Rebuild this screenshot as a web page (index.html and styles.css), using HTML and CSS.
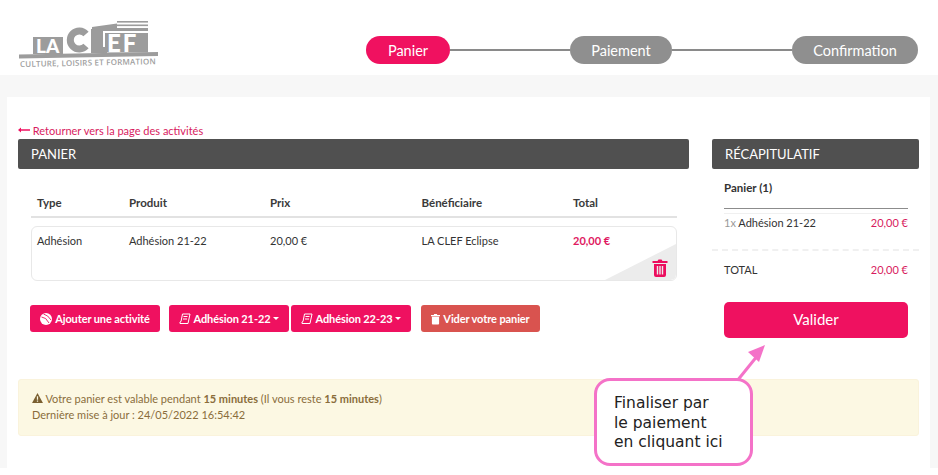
FILE: index.html
```html
<!DOCTYPE html>
<html lang="fr">
<head>
<meta charset="utf-8">
<title>Panier</title>
<link rel="stylesheet" href="styles.css">
</head>
<body>
<header class="top">
  <svg class="logo" viewBox="0 0 140 52" aria-label="La Clef">
    <rect class="g" x="98" y="2" width="31" height="1.600"/>
    <rect class="g" x="98" y="5.500" width="31" height="1.600"/>
    <path class="g" d="M73 8 L98 4.500 V9 H129 V12 H73Z"/>
    <path class="g" d="M72 10 H84 V28 H88 V34 H72Z"/>
    <path class="g" d="M86 14 H129 V33.500 H86Z"/>
    <path class="g" d="M14 18 H44 V35 H14Z"/>
    <path class="g" d="M0 35.500 L139 33 V37 L0 39.500Z"/>
    <text class="la" x="17" y="33.500">LA</text>
    <path class="c" d="M67 15 A9 9 0 1 0 67 27"/>
    <text class="ef" x="88" y="32.500">EF</text>
    <text class="sub" x="1" y="48" transform="rotate(-1.200 1 48)">CULTURE, LOISIRS ET FORMATION</text>
  </svg>
  <nav class="steps">
    <span class="step active">Panier</span>
    <span class="link l1"></span>
    <span class="step s2">Paiement</span>
    <span class="link l2"></span>
    <span class="step s3">Confirmation</span>
  </nav>
</header>

<div class="band">
  <main class="card">
    <section class="cart">
      <a class="back"><svg class="back-ic" viewBox="0 0 12 6"><path d="M0 3 L3 0.5 V2.300 H12 V3.700 H3 V5.500Z"/></svg> Retourner vers la page des activités</a>
      <h2 class="bar">PANIER</h2>
      <div class="table">
        <div class="row head"><span>Type</span><span>Produit</span><span>Prix</span><span>Bénéficiaire</span><span>Total</span></div>
        <div class="row item">
          <span>Adhésion</span><span>Adhésion 21-22</span><span>20,00 €</span><span>LA CLEF Eclipse</span><span class="pink">20,00 €</span>
          <svg class="corner" viewBox="0 0 71 36" preserveAspectRatio="none"><path d="M0 36 L71 0 V30 Q71 36 65 36Z"/></svg>
          <svg class="trash" viewBox="0 0 16 18"><path d="M5.500 2 L6.500 .5 H9.500 L10.500 2 H15.500 V4 H.5 V2Z M2 5 H14 V16 Q14 18 12 18 H4 Q2 18 2 16Z M4.800 7 V15.500 H6.200 V7Z M7.300 7 V15.500 H8.700 V7Z M9.800 7 V15.500 H11.200 V7Z" fill-rule="evenodd"/></svg>
        </div>
      </div>
      <div class="actions">
        <button class="btn b1"><svg class="ic" viewBox="0 0 12 12"><circle cx="6" cy="6" r="6"/><path class="cut" d="M1.500 4 Q6 4 9 10 M3.500 1 Q8 2 11 7"/></svg> Ajouter une activité</button>
        <button class="btn b2"><svg class="ic" viewBox="0 0 12 12"><path class="scroll" d="M3.500 1 H11 L9 10.500 H1 Q.5 8.500 2 8.500 Z M4.500 3.500 H8.500 M4 6 H8"/></svg> Adhésion 21-22<i class="caret"></i></button>
        <button class="btn b3"><svg class="ic" viewBox="0 0 12 12"><path class="scroll" d="M3.500 1 H11 L9 10.500 H1 Q.5 8.500 2 8.500 Z M4.500 3.500 H8.500 M4 6 H8"/></svg> Adhésion 22-23<i class="caret"></i></button>
        <button class="btn danger"><svg class="ic ic-t" viewBox="0 0 10 12"><path d="M3 1.500 L3.500 .5 H6.500 L7 1.500 H10 V3 H0 V1.500Z M1 3.500 H9 V11 Q9 12 8 12 H2 Q1 12 1 11Z"/></svg> Vider votre panier</button>
      </div>
    </section>

    <aside class="recap">
      <h2 class="bar">RÉCAPITULATIF</h2>
      <div class="recap-body">
        <h3 class="recap-title">Panier (1)</h3>
        <div class="line"><span><span class="qty">1x</span> Adhésion 21-22</span><span class="pink">20,00 €</span></div>
      </div>
      <div class="total-wrap">
        <div class="line total"><span>TOTAL</span><span class="pink">20,00 €</span></div>
        <button class="validate">Valider</button>
      </div>
    </aside>

    <div class="alert">
      <p><svg class="warn" viewBox="0 0 12 11"><path fill-rule="evenodd" d="M6 0 L12 11 H0Z M5.300 3.500 V7.500 H6.700 V3.500Z M5.300 8.300 V9.600 H6.700 V8.300Z"/></svg> Votre panier est valable pendant <b>15 minutes</b> (Il vous reste <b>15 minutes</b>)</p>
      <p>Dernière mise à jour : 24/05/2022 16:54:42</p>
    </div>
  </main>
</div>

<svg class="arrow" viewBox="0 0 40 44"><path d="M5 41 L26 15" /><path class="head-a" d="M33 5 L16 12 L27 22Z"/></svg>
<div class="callout">Finaliser par<br>le paiement<br>en cliquant ici</div>
</body>
</html>
```

FILE: styles.css
```css
* { box-sizing: border-box; }
html, body { margin: 0; height: 475px; overflow: hidden; background: #fff; }
body { font-family: Lato, "Liberation Sans", sans-serif; font-size: 11px; color: #333; position: relative; }

.top { height: 75px; display: flex; justify-content: space-between; align-items: flex-start; padding: 19px 20px 0 19px; }
.logo { width: 140px; height: 52px; display: block; }
.logo .g { fill: #9c9c9c; }
.logo .la { font: 900 19px Lato, sans-serif; fill: #fff; }
.logo .ef { font: 900 24px Lato, sans-serif; fill: #fff; letter-spacing: 2px; }
.logo .c { fill: none; stroke: #9c9c9c; stroke-width: 7; }
.logo .sub { font: 600 8px "Open Sans", sans-serif; fill: #a0a0a0; letter-spacing: .2px; }

.steps { display: flex; align-items: center; width: 552px; margin-top: 17px; }
.step { height: 28px; border-radius: 14px; background: #8f8f8f; color: #fff; font-size: 14.500px; line-height: 29px; text-align: center; flex: none; }
.step.active { background: #f01160; width: 84px; }
.s2 { width: 102px; }
.s3 { width: 126px; }
.link { flex: 1; height: 2px; background: #8a8a8a; }

.band { background: #f7f7f7; height: 393px; padding: 22px 8px 0 7px; }
.card { background: #fff; height: 371px; padding: 28px 11px 0; display: grid; grid-template-columns: 671px 207px; column-gap: 23px; align-content: start; }

.back { display: block; height: 14px; color: #d81b60; font-size: 11px; line-height: 12px; }
.back-ic { width: 12px; height: 6px; fill: #ef1160; vertical-align: 2px; }
.bar { margin: 0; height: 30px; background: #505050; border-radius: 2px; color: #fff; font-size: 13px; font-weight: 400; line-height: 30px; padding-left: 13px; }

.table { margin: 0 12px 0 13px; }
.row { display: grid; grid-template-columns: 92px 141px 151.500px 151.500px 1fr; position: relative; }
.head { height: 49px; padding: 25px 0 0 6px; border-bottom: 2px solid #e2e2e2; font-size: 11.500px; font-weight: 700; color: #3a3a3a; line-height: 17px; }
.item { height: 55px; margin-top: 8px; padding: 6px 0 0 5px; border: 1px solid #e8e8e8; border-radius: 6px; line-height: 16px; overflow: hidden; }
.pink { color: #d81b60; }
.item .pink { font-weight: 700; color: #e0195f; }
.corner { position: absolute; right: 0; bottom: 0; width: 71px; height: 36px; fill: #ececec; }
.trash { position: absolute; right: 8px; bottom: 3px; width: 16px; height: 18px; fill: #ec0d5e; }

.actions { display: flex; margin: 24px 0 0 12px; }
.btn { height: 27px; border: 0; border-radius: 3px; background: #ef1160; color: #fff; font: 700 11px Lato, sans-serif; letter-spacing: -.1px; padding: 0; display: flex; align-items: center; justify-content: center; gap: 3px; }
.b1 { width: 130px; margin-right: 9px; }
.b2, .b3 { width: 120px; }
.b2 { margin-right: 2px; }
.danger { width: 119px; margin-left: 10px; background: #d9534f; }
.ic { width: 12px; height: 12px; fill: #fff; flex: none; }
.ic-t { width: 9px; }
.cut { fill: none; stroke: #ef1160; stroke-width: .9; }
.scroll { fill: none; stroke: #fff; stroke-width: 1; }
.caret { width: 0; height: 0; border: 3.500px solid transparent; border-top-color: #fff; border-bottom: 0; margin-left: 0; }

.recap { grid-column: 2; grid-row: 1; padding-top: 14px; }
.recap-body { padding: 0 11px 0 12px; }
.recap-title { margin: 11px 0 4px; height: 29px; font-size: 11.500px; font-weight: 700; line-height: 16px; border-bottom: 1px solid #8c8c8c; color: #333; }
.recap-body .line { border-top: 1px solid #f0f0f0; padding-top: 1px; height: 36px; }
.line { display: flex; justify-content: space-between; line-height: 16px; }
.qty { color: #999; }
.total-wrap { border-top: 2px dashed #f0f0f0; padding: 11px 11px 0 12px; }
.total { height: 40px; }
.validate { display: block; width: 100%; height: 36px; padding: 0 0 2px; border: 0; border-radius: 5px; background: #ef1160; color: #fff; font: 400 15px Lato, sans-serif; }

.alert { width: 901px; height: 57px; position: absolute; top: 379px; left: 18px; background: #fcf8e3; border: 1px solid #faf3dc; border-radius: 3px; color: #8a6d3b; padding: 11px 13px; line-height: 16px; }
.alert p { margin: 0; }
.warn { width: 11px; height: 10px; fill: #7a5f30; }

.callout { position: absolute; left: 594px; top: 378px; width: 159px; height: 88px; border: 3px solid #f472c8; border-radius: 16px; background: #fff; color: #222; font: 15.500px/19.500px "DejaVu Sans", Verdana, sans-serif; padding: 13px 0 0 17px; }
.arrow { position: absolute; left: 732px; top: 340px; width: 40px; height: 44px; }
.arrow path { stroke: #f472c8; stroke-width: 3; fill: none; }
.arrow .head-a { fill: #f472c8; stroke: none; }
```
